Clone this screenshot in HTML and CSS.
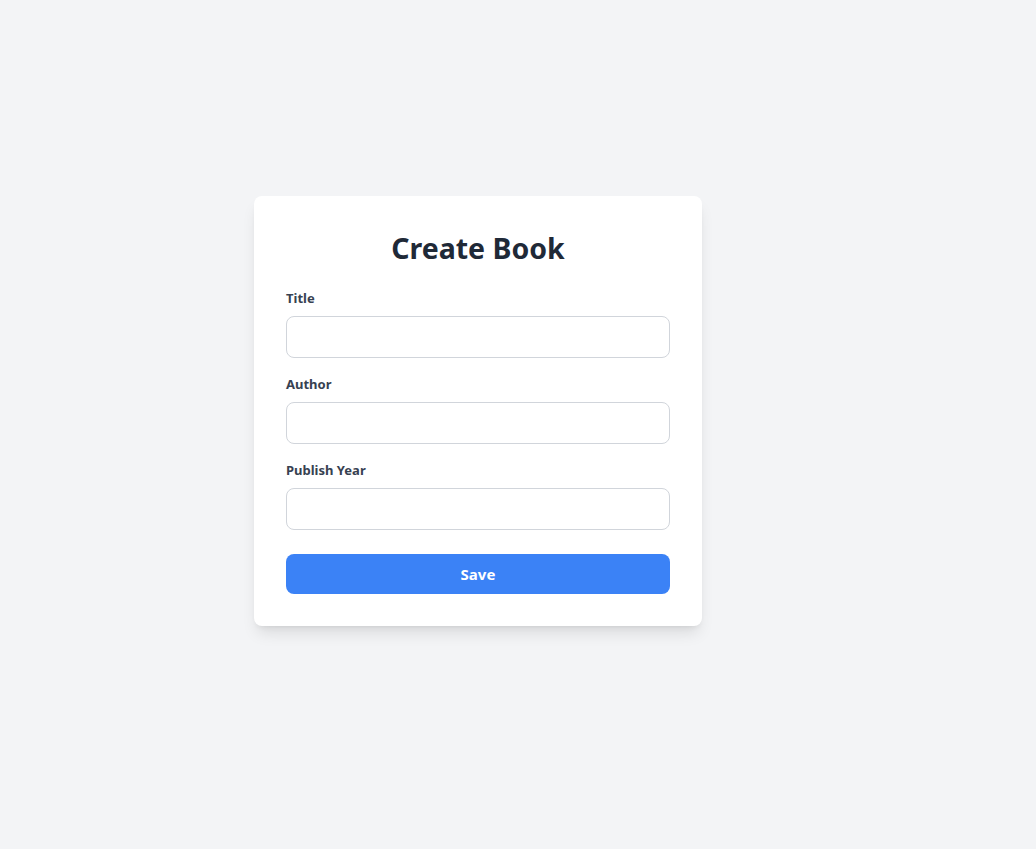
FILE: index.html
```html
<!DOCTYPE html>
<html lang="en">
<head>
<meta charset="utf-8">
<title>Create Book</title>
<link rel="stylesheet" href="styles.css">
</head>
<body>
<main class="page">
  <form class="card">
    <h1 class="card-title">Create Book</h1>
    <div class="field">
      <label class="field-label" for="title">Title</label>
      <input class="field-input" id="title" type="text">
    </div>
    <div class="field">
      <label class="field-label" for="author">Author</label>
      <input class="field-input" id="author" type="text">
    </div>
    <div class="field field-last">
      <label class="field-label" for="year">Publish Year</label>
      <input class="field-input" id="year" type="text">
    </div>
    <button class="save-btn" type="button">Save</button>
  </form>
</main>
</body>
</html>
```
FILE: styles.css
```css
* { box-sizing: border-box; }
html, body { margin: 0; padding: 0; }
body {
  background: #f3f4f6;
  font-family: "Noto Sans", "Open Sans", sans-serif;
  min-height: 849px;
}
.page {
  padding: 196px 0 0 254px;
}
.card {
  width: 448px;
  background: #ffffff;
  border-radius: 8px;
  padding: 32px;
  box-shadow: 0 10px 15px -3px rgba(0,0,0,0.1), 0 4px 6px -4px rgba(0,0,0,0.1);
  display: flex;
  flex-direction: column;
}
.card-title {
  margin: 0 0 24px;
  padding-top: 2px;
  height: 36px;
  font-size: 28.5px;
  line-height: 36px;
  font-weight: 700;
  color: #1f2937;
  text-align: center;
}
.field {
  display: flex;
  flex-direction: column;
  margin-bottom: 16px;
}
.field-last { margin-bottom: 24px; }
.field-label {
  font-size: 13px;
  line-height: 20px;
  font-weight: 700;
  color: #374151;
  margin-bottom: 8px;
}
.field-input {
  height: 42px;
  border: 1px solid #d1d5db;
  border-radius: 8px;
  padding: 8px 16px;
  font-size: 16px;
  font-family: inherit;
  background: #fff;
  outline: none;
}
.save-btn {
  height: 40px;
  border: none;
  border-radius: 8px;
  background: #3b82f6;
  color: #ffffff;
  font-family: inherit;
  font-size: 15px;
  font-weight: 700;
  cursor: pointer;
}
```
